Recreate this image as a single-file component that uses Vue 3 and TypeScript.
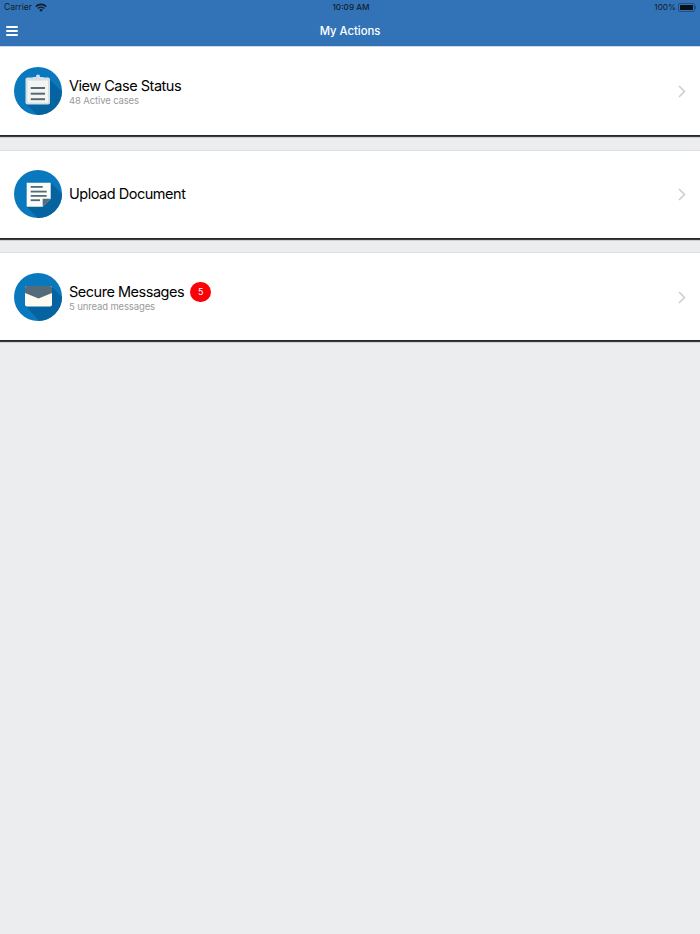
<script setup lang="ts">
interface Action {
  id: string
  title: string
  sub?: string
  badge?: string
}
const actions: Action[] = [
  { id: 'case', title: 'View Case Status', sub: '48 Active cases' },
  { id: 'doc', title: 'Upload Document' },
  { id: 'msg', title: 'Secure Messages', sub: '5 unread messages', badge: '5' },
]
</script>

<template>
  <div class="page">
    <header class="header">
      <div class="status">
        <div class="status-left">
          <span>Carrier</span>
          <svg width="12" height="9" viewBox="0 0 12 9">
            <path d="M0.3 3 A8 8 0 0 1 11.7 3 L10.5 4.2 A6.3 6.3 0 0 0 1.5 4.2Z" fill="#111c2b" />
            <path d="M2.3 5 A5.2 5.2 0 0 1 9.7 5 L8.6 6.1 A3.6 3.6 0 0 0 3.4 6.1Z" fill="#111c2b" />
            <path d="M4.2 6.9 A2.6 2.6 0 0 1 7.8 6.9 L6 8.8Z" fill="#111c2b" />
          </svg>
        </div>
        <span class="status-time">10:09 AM</span>
        <div class="status-right">
          <span>100%</span>
          <span class="battery"><span class="battery-fill"></span></span>
          <span class="battery-tip"></span>
        </div>
      </div>
      <div class="nav">
        <div class="burger"><span></span><span></span><span></span></div>
        <div class="nav-title">My Actions</div>
      </div>
    </header>

    <main class="list">
      <section v-for="a in actions" :key="a.id" class="card" :class="'card-' + a.id">
        <svg class="icon" width="48" height="48" viewBox="0 0 48 48">
          <defs>
            <clipPath :id="'clip-' + a.id"><circle cx="24" cy="24" r="24" /></clipPath>
          </defs>
          <circle cx="24" cy="24" r="24" fill="#0a78bd" />
          <g v-if="a.id === 'case'">
            <path d="M12 37 L36 13 L60 36 L36 60Z" fill="#05639f" :clip-path="'url(#clip-' + a.id + ')'" />
            <rect x="11.5" y="10.5" width="24.5" height="27" rx="2" fill="#d5e0e6" />
            <rect x="13.5" y="13.5" width="20.5" height="22" fill="#f4f5f0" />
            <rect x="18.5" y="10" width="11" height="3.5" rx="1" fill="#d5e0e6" />
            <circle cx="24" cy="9.5" r="2" fill="#d5e0e6" />
            <rect x="16.7" y="20" width="14.3" height="2" fill="#546c7a" />
            <rect x="16.7" y="25.7" width="14.3" height="2" fill="#546c7a" />
            <rect x="16.7" y="31.2" width="14.3" height="2" fill="#546c7a" />
          </g>
          <g v-else-if="a.id === 'doc'">
            <path d="M12.7 36.7 L36.7 12.7 L60 36 L36 60Z" fill="#05639f" :clip-path="'url(#clip-' + a.id + ')'" />
            <path d="M12.7 12.7 H36.7 V28.7 L28.7 36.7 H12.7Z" fill="#fbfbf7" />
            <path d="M28.7 28.7 H36.7 L28.7 36.7Z" fill="#546c7a" />
            <rect x="16.7" y="16" width="12" height="1.8" fill="#546c7a" />
            <rect x="16.7" y="20.7" width="16" height="1.8" fill="#546c7a" />
            <rect x="16.7" y="25" width="16" height="1.8" fill="#546c7a" />
            <rect x="16.7" y="29.3" width="9.3" height="1.8" fill="#546c7a" />
          </g>
          <g v-else>
            <path d="M11 32 L38 14 L60 36 L36 60Z" fill="#05639f" :clip-path="'url(#clip-' + a.id + ')'" />
            <rect x="11" y="13" width="27" height="20.5" rx="2" fill="#fdfbf1" />
            <path d="M13 13 H36 A2 2 0 0 1 38 15 V20 L24.5 25.5 L11 20 V15 A2 2 0 0 1 13 13Z" fill="#546c7a" />
          </g>
        </svg>
        <div class="text">
          <div class="title-row">
            <span class="title">{{ a.title }}</span>
            <span v-if="a.badge" class="badge">{{ a.badge }}</span>
          </div>
          <div v-if="a.sub" class="sub">{{ a.sub }}</div>
        </div>
        <svg class="chevron" width="8" height="13" viewBox="0 0 8 13">
          <path d="M1 1 L6.5 6.5 L1 12" fill="none" stroke="#c8d0d4" stroke-width="1.6" />
        </svg>
      </section>
    </main>
  </div>
</template>

<style>
html, body { margin: 0; background: #ecedef; }
</style>

<style scoped>
.page {
  width: 700px;
  height: 934px;
  background: #ecedef;
  font-family: Inter, "Liberation Sans", sans-serif;
  overflow: hidden;
}
.header {
  height: 47px;
  box-sizing: border-box;
  background: #3273b8;
  border-bottom: 1px solid #cfdbe8;
}
.status {
  height: 14px;
  padding: 0 4px;
  display: flex;
  justify-content: space-between;
  align-items: center;
  font-size: 8.5px;
  color: #111c2b;
  position: relative;
}
.status-left { display: flex; align-items: center; gap: 3px; }
.status-time {
  position: absolute;
  left: 2px;
  right: 0;
  text-align: center;
  font-size: 8.2px;
  font-weight: 500;
}
.status-right { display: flex; align-items: center; font-size: 8.2px; }
.battery {
  margin-left: 2px;
  width: 13px;
  height: 5px;
  border: 1px solid #1f4f83;
  border-radius: 2px;
  padding: 1px;
  box-sizing: content-box;
  display: block;
}
.battery-fill { display: block; width: 100%; height: 100%; background: #0a0f18; }
.battery-tip { width: 1px; height: 3px; background: #1f4f83; }
.nav {
  height: 32px;
  display: flex;
  align-items: center;
  justify-content: center;
  position: relative;
  padding-top: 2px;
  box-sizing: border-box;
}
.burger {
  position: absolute;
  left: 6px;
  top: 12px;
  width: 12px;
  display: flex;
  flex-direction: column;
  gap: 2px;
}
.burger span { display: block; height: 2px; background: #fff; border-radius: 1px; }
.nav-title { color: #fff; font-size: 11.3px; font-weight: 500; }
.list { display: flex; flex-direction: column; }
.card {
  height: 89px;
  box-sizing: border-box;
  background: #fff;
  display: flex;
  align-items: center;
  padding: 0 14px;
  box-shadow: 0 1px 1px 0 rgba(0, 0, 0, 0.75);
  border-bottom: 1px solid #262626;
}
.card-doc, .card-msg { border-top: 1px solid #dcdee1; }
.card-doc { margin-top: 14px; padding-bottom: 1px; }
.card-msg { margin-top: 13px; }
.icon { flex: none; margin-right: 7px; }
.text { display: flex; flex-direction: column; padding-top: 3px; }
.card-doc .text { padding-top: 0; }
.title-row { display: flex; align-items: center; }
.title { font-size: 14.5px; color: #000; line-height: 16px; letter-spacing: -0.48px; }
.sub { font-size: 9.5px; color: #9a9a9a; line-height: 12px; letter-spacing: -0.13px; margin-top: 1px; }
.badge {
  width: 21px;
  height: 20px;
  margin: -2px 0 -2px 6px;
  border-radius: 10px;
  background: #fb0007;
  color: #fff;
  font-size: 9px;
  display: flex;
  align-items: center;
  justify-content: center;
}
.chevron { margin-left: auto; margin-top: 1px; flex: none; }
</style>
